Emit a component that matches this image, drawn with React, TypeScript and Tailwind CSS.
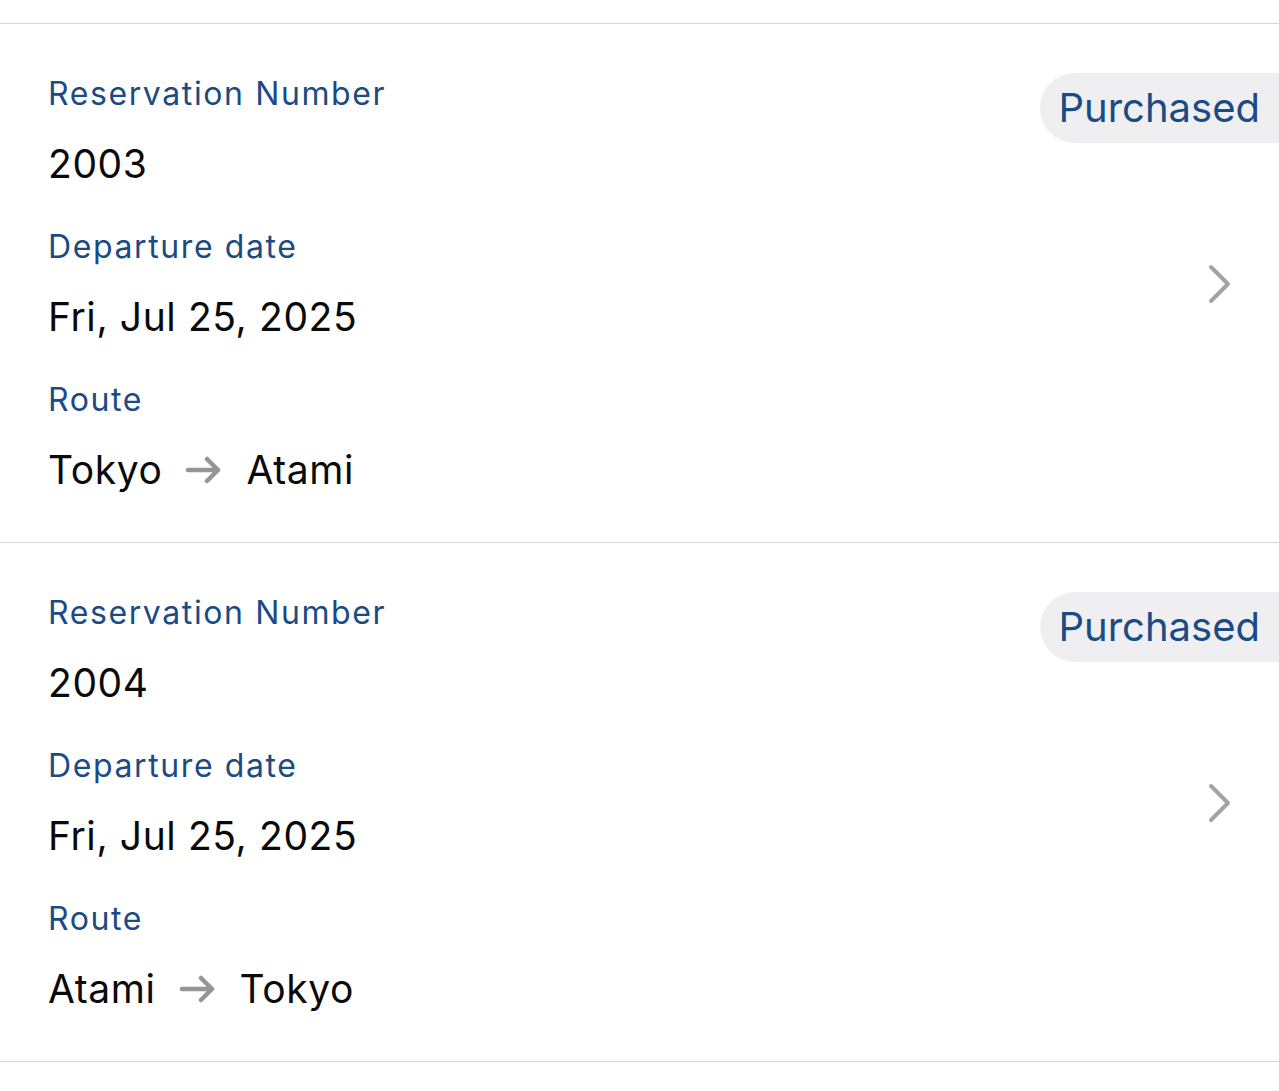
import React from "react";

const Chevron = () => (
  <svg width="26" height="40" viewBox="0 0 26 40" fill="none">
    <path d="M4 3 L21 20 L4 37" stroke="#a3a3a3" strokeWidth="4" strokeLinecap="round" strokeLinejoin="round" />
  </svg>
);

const Arrow = () => (
  <svg width="38" height="28" viewBox="0 0 38 28" fill="none">
    <path d="M3 14 H33 M22 3 L33 14 L22 25" stroke="#959595" strokeWidth="4.5" strokeLinecap="round" strokeLinejoin="round" />
  </svg>
);

type R = { num: string; date: string; from: string; to: string };

const Field = ({ label, children, first }: { label: string; children: React.ReactNode; first?: boolean }) => (
  <div className={first ? "mt-[1px]" : "mt-[39px]"}>
    <div className="text-[32px] leading-[40px] text-[#1b4b84] tracking-[1.6px]">{label}</div>
    <div className="mt-[26px] text-[39px] leading-[48px] text-[#0a0a0a] tracking-[0.6px]">{children}</div>
  </div>
);

const Card = ({ r }: { r: R }) => (
  <div className="flex border-b-[1.5px] border-[#d4d4d6] pt-[49px] pb-[48px] pl-[48px]">
    <div className="flex-1">
      <Field label="Reservation Number" first>{r.num}</Field>
      <Field label="Departure date">{r.date}</Field>
      <Field label="Route">
        <span className="flex items-center">
          <span>{r.from}</span>
          <span className="mx-[23px] flex items-center"><Arrow /></span>
          <span>{r.to}</span>
        </span>
      </Field>
    </div>
    <div className="flex flex-col items-end">
      <div className="h-[70px] rounded-l-full bg-[#efeff1] pl-[19px] pr-[19px] flex items-center text-[40px] text-[#1b4b84]">
        Purchased
      </div>
      <div className="flex-1 flex items-center pb-[70px] mr-[46px]">
        <Chevron />
      </div>
    </div>
  </div>
);

export default function App() {
  const data: R[] = [
    { num: "2003", date: "Fri, Jul 25, 2025", from: "Tokyo", to: "Atami" },
    { num: "2004", date: "Fri, Jul 25, 2025", from: "Atami", to: "Tokyo" },
  ];
  return (
    <div className="min-h-[1091px] bg-white overflow-hidden" style={{ fontFamily: "Inter, 'Noto Sans', sans-serif" }}>
      <div className="h-[24px] border-b-[1.5px] border-[#d4d4d6]" />
      {data.map((r) => (
        <Card key={r.num} r={r} />
      ))}
    </div>
  );
}
